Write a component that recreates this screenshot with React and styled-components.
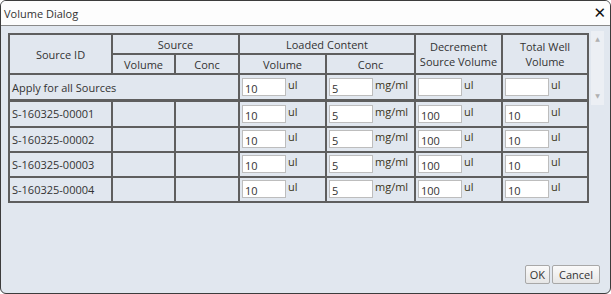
import React from 'react'
import styled, { createGlobalStyle } from 'styled-components'

const Global = createGlobalStyle`
  html, body { margin: 0; padding: 0; background: #fff; }
  body { font-family: "Open Sans", "DejaVu Sans", sans-serif; }
  * { box-sizing: border-box; }
`

const Dialog = styled.div`
  width: 611px;
  height: 294px;
  border: 1px solid #3c3c3c;
  border-radius: 6px;
  background: #e1e7ef;
  display: flex;
  flex-direction: column;
  overflow: hidden;
  font-size: 11px;
  color: #333;
`

const TitleBar = styled.div`
  height: 25px;
  flex: none;
  background: #fdfdfd;
  border-bottom: 1px solid #8a8a8a;
  display: flex;
  align-items: center;
  justify-content: space-between;
  padding: 0 4px 0 3px;
  font-size: 11px;
  color: #333;
`

const Close = styled.span`
  font-size: 15px;
  font-weight: bold;
  color: #111;
  line-height: 1;
  font-family: "DejaVu Sans", sans-serif;
`

const Body = styled.div`
  flex: 1;
  display: flex;
  flex-direction: column;
  padding: 7px 6px 0 7px;
`

const HeadWrap = styled.div`
  display: flex;
  align-items: stretch;
`

const ScrollTrack = styled.div`
  width: 15px;
  margin: -2px 0 -4px 2px;
  background: #eceff4;
  display: flex;
  flex-direction: column;
  justify-content: space-between;
  align-items: center;
  padding: 5px 0 6px;
  color: #b0b0b0;
  font-size: 6px;
  line-height: 1;
`

const Grid = styled.table`
  border-collapse: collapse;
  table-layout: fixed;
  width: 579px;
  background: #e1e7ef;
  td, th {
    border: 2px solid #5e5e5e;
    padding: 0;
    font-weight: normal;
    overflow: hidden;
    white-space: nowrap;
  }
  ${p => p.$joined && 'tr:first-child td { border-top-width: 1px; }'}
`

const HeadCell = styled.th`
  text-align: center;
  height: 20px;
  line-height: 15px;
  white-space: normal !important;
`

const Row = styled.tr`
  height: ${p => p.$h}px;
`

const LabelCell = styled.td`
  padding-left: 2px !important;
  text-align: left;
`

const InputCell = styled.td`
  padding: 0 0 0 2px !important;
  vertical-align: middle;
`

const Field = styled.span`
  display: inline-flex;
  align-items: flex-start;
`

const Box = styled.input`
  width: 44px;
  height: 18px;
  border: 1px solid #bdbdbd;
  background: #fff;
  font: 11px "Open Sans", sans-serif;
  color: #333;
  padding: 3px 2px 0;
  margin: 0;
  outline: none;
`

const Unit = styled.span`
  margin-left: 2px;
  margin-top: 1px;
  line-height: 12px;
  color: #3b3520;
`

const Footer = styled.div`
  margin-top: auto;
  display: flex;
  justify-content: flex-end;
  gap: 2px;
  padding: 0 4px 9px 0;
`

const Button = styled.button`
  height: 19px;
  padding: 0 ${p => p.$pad}px;
  font: 11px "Open Sans", sans-serif;
  color: #333;
  border: 1px solid #a8a8a8;
  border-radius: 2px;
  background: linear-gradient(#fafafa, #e6e6e6);
`

const cols = [103, 63, 64, 87, 89, 87, 86]

const Cols = () => (
  <colgroup>
    {cols.map((w, i) => <col key={i} style={{ width: w }} />)}
  </colgroup>
)

const UnitInput = ({ value, unit }) => (
  <Field>
    <Box defaultValue={value} />
    <Unit>{unit}</Unit>
  </Field>
)

const sources = ['S-160325-00001', 'S-160325-00002', 'S-160325-00003', 'S-160325-00004']

export default function App() {
  return (
    <>
      <Global />
      <Dialog>
        <TitleBar>
          <span>Volume Dialog</span>
          <Close>✕</Close>
        </TitleBar>
        <Body>
          <HeadWrap>
            <Grid>
              <Cols />
              <thead>
                <tr>
                  <HeadCell rowSpan={2}>Source ID</HeadCell>
                  <HeadCell colSpan={2}>Source</HeadCell>
                  <HeadCell colSpan={2}>Loaded Content</HeadCell>
                  <HeadCell rowSpan={2}>Decrement<br />Source Volume</HeadCell>
                  <HeadCell rowSpan={2}>Total Well<br />Volume</HeadCell>
                </tr>
                <tr>
                  <HeadCell>Volume</HeadCell>
                  <HeadCell>Conc</HeadCell>
                  <HeadCell>Volume</HeadCell>
                  <HeadCell>Conc</HeadCell>
                </tr>
              </thead>
              <tbody>
                <Row $h={26}>
                  <LabelCell colSpan={3}>Apply for all Sources</LabelCell>
                  <InputCell><UnitInput value="10" unit="ul" /></InputCell>
                  <InputCell><UnitInput value="5" unit="mg/ml" /></InputCell>
                  <InputCell><UnitInput value="" unit="ul" /></InputCell>
                  <InputCell><UnitInput value="" unit="ul" /></InputCell>
                </Row>
              </tbody>
            </Grid>
            <ScrollTrack>
              <span>▲</span>
              <span>▼</span>
            </ScrollTrack>
          </HeadWrap>
          <Grid $joined>
            <Cols />
            <tbody>
              {sources.map(id => (
                <Row key={id} $h={25}>
                  <LabelCell>{id}</LabelCell>
                  <td />
                  <td />
                  <InputCell><UnitInput value="10" unit="ul" /></InputCell>
                  <InputCell><UnitInput value="5" unit="mg/ml" /></InputCell>
                  <InputCell><UnitInput value="100" unit="ul" /></InputCell>
                  <InputCell><UnitInput value="10" unit="ul" /></InputCell>
                </Row>
              ))}
            </tbody>
          </Grid>
          <Footer>
            <Button $pad={4}>OK</Button>
            <Button $pad={6}>Cancel</Button>
          </Footer>
        </Body>
      </Dialog>
    </>
  )
}
